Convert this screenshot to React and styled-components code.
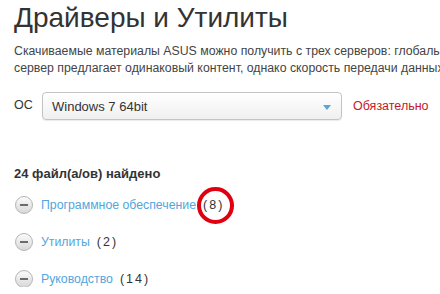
import styled, { createGlobalStyle } from "styled-components";

const GlobalStyle = createGlobalStyle`
  html, body {
    margin: 0;
    padding: 0;
    background: #ffffff;
    overflow: hidden;
  }
  body {
    font-family: "Liberation Sans", Arial, sans-serif;
    color: #333333;
  }
`

const Page = styled.div`
  display: flex;
  flex-direction: column;
  padding: 2px 0 0 14px;
  width: 700px;
`

const Title = styled.h1`
  margin: 0;
  font-size: 28px;
  font-weight: normal;
  line-height: 31px;
  color: #333333;
`

const Description = styled.p`
  margin: 10px 0 0;
  font-size: 12.3px;
  line-height: 17px;
  color: #444444;
  white-space: nowrap;
`

const OsRow = styled.div`
  display: flex;
  align-items: center;
  margin-top: 15px;
  height: 28px;
`

const OsLabel = styled.span`
  font-size: 12.5px;
  width: 28px;
  margin-top: -2px;
`

const Select = styled.div`
  display: flex;
  align-items: center;
  justify-content: space-between;
  box-sizing: border-box;
  width: 300px;
  height: 28px;
  padding: 0 10px 0 9px;
  border: 1px solid #c4c4c4;
  border-radius: 4px;
  background: linear-gradient(#ffffff, #f0f0f0);
  box-shadow: 0 1px 1px rgba(0, 0, 0, 0.08);
  font-size: 13px;
  color: #333333;
`

const Arrow = styled.span`
  width: 0;
  height: 0;
  border-left: 4px solid transparent;
  border-right: 4px solid transparent;
  border-top: 5px solid #5aa5d8;
  margin-top: 2px;
`

const Required = styled.span`
  margin-left: 11px;
  font-size: 12.5px;
  color: #c4182d;
`

const Found = styled.div`
  margin-top: 46px;
  font-size: 13px;
  font-weight: bold;
  color: #333333;
`

const List = styled.ul`
  list-style: none;
  margin: 15px 0 0;
  padding: 0;
  display: flex;
  flex-direction: column;
  gap: 20px;
`

const Item = styled.li`
  display: flex;
  align-items: center;
  height: 17px;
`

const Toggle = styled.span`
  display: flex;
  align-items: center;
  justify-content: center;
  box-sizing: border-box;
  width: 18px;
  height: 18px;
  border-radius: 50%;
  border: 1px solid #b5b5b5;
  background: linear-gradient(#fbfbfb, #d8d8d8);
  margin-left: 1px;
  margin-right: 8px;

  &::before {
    content: "";
    width: 8px;
    height: 2px;
    background: #6b6b6b;
  }
`

const CategoryLink = styled.a`
  font-size: 12.3px;
  color: #52a6dc;
  text-decoration: none;
`

const Count = styled.span`
  position: relative;
  margin-left: 7px;
  font-size: 12.5px;
  letter-spacing: 2px;
  color: #333333;

  ${({ $circled }) => $circled && `
    &::after {
      content: "";
      position: absolute;
      left: -6px;
      top: -11px;
      width: 29px;
      height: 29px;
      border: 4px solid #e0000f;
      border-radius: 50%;
    }
  `}
`

const categories = [
  { name: "Программное обеспечение", count: 8, circled: true },
  { name: "Утилиты", count: 2 },
  { name: "Руководство", count: 14 },
]

const App = () => {
  return (
    <Page>
      <GlobalStyle />
      <Title>Драйверы и Утилиты</Title>
      <Description>
        Скачиваемые материалы ASUS можно получить с трех серверов: глобальный, китайский и европейский. Каждый
        <br />
        сервер предлагает одинаковый контент, однако скорость передачи данных может отличаться.
      </Description>
      <OsRow>
        <OsLabel>ОС</OsLabel>
        <Select>
          <span>Windows 7 64bit</span>
          <Arrow />
        </Select>
        <Required>Обязательно</Required>
      </OsRow>
      <Found>24 файл(а/ов) найдено</Found>
      <List>
        {categories.map((c) => (
          <Item key={c.name}>
            <Toggle />
            <CategoryLink href="#">{c.name}</CategoryLink>
            <Count $circled={c.circled}>({c.count})</Count>
          </Item>
        ))}
      </List>
    </Page>
  )
}

export default App;
